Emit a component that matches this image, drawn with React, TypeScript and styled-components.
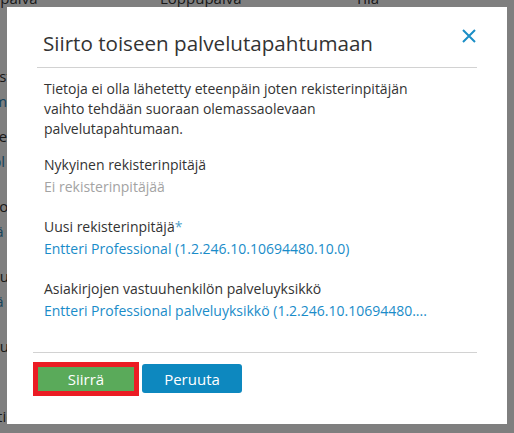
import React from "react";
import styled, { createGlobalStyle } from "styled-components";

const GlobalStyle = createGlobalStyle`
  html, body { margin: 0; padding: 0; overflow: hidden; }
  body { font-family: "Segoe UI", "Open Sans", "Noto Sans", sans-serif; background: #fff; }
`;

const Page = styled.div`
  width: 514px;
  height: 433px;
  overflow: hidden;
  background: #fff;
`;

const BackList = styled.div`
  display: flex;
  flex-direction: column;
  margin-top: -14px;
  margin-left: -30px;
  font-size: 15px;
  line-height: 25px;
`;

const HeaderRow = styled.div`
  display: grid;
  grid-template-columns: 190px 195px 100px;
  color: #333;
  margin-bottom: 8px;
`;

const BackLabel = styled.div<{ $gap?: number }>`
  color: #333;
  margin-top: ${(p) => p.$gap ?? 20}px;
`;

const BackValue = styled.div`
  color: #2c86b8;
`;

const Overlay = styled.div`
  position: fixed;
  inset: 0;
  background: rgba(0, 0, 0, 0.5);
  display: flex;
  align-items: flex-start;
  justify-content: flex-start;
  padding: 7px 0 0 7px;
`;

const Modal = styled.div`
  width: 500px;
  height: 417px;
  background: #fff;
  box-sizing: border-box;
  padding: 0 30px;
  display: flex;
  flex-direction: column;
`;

const Header = styled.div`
  display: flex;
  align-items: center;
  justify-content: space-between;
  height: 60px;
  border-bottom: 1px solid #d2d2d2;
  padding: 0 0 0 6px;
`;

const Title = styled.h2`
  margin: 0;
  padding-top: 12px;
  font-weight: 400;
  font-size: 20.6px;
  color: #333;
`;

const CloseButton = styled.button`
  border: 0;
  background: none;
  padding: 0;
  margin-top: -2px;
  width: 16px;
  height: 16px;
  display: flex;
  cursor: pointer;
`;

const Body = styled.div`
  flex: 1;
  padding: 11px 6px 0 7px;
  font-size: 14px;
  color: #333;
`;

const Intro = styled.p`
  margin: 0 0 15px;
  line-height: 20px;
  max-width: 400px;
`;

const Field = styled.div`
  display: flex;
  flex-direction: column;
  margin-bottom: 18px;
`;

const Label = styled.div`
  line-height: 22px;
  color: #333;
`;

const Req = styled.span`
  color: #4f9fc9;
`;

const Value = styled.div<{ $muted?: boolean }>`
  line-height: 22px;
  color: ${(p) => (p.$muted ? "#a3a3a3" : "#1a8cc9")};
  white-space: nowrap;
  overflow: hidden;
`;

const Footer = styled.div`
  border-top: 1px solid #d2d2d2;
  display: flex;
  gap: 3px;
  height: 72px;
  margin-left: -4px;
  box-sizing: border-box;
  padding-top: 9px;
  align-items: flex-start;
`;

const Button = styled.button<{ $variant: "primary" | "secondary" }>`
  font-family: inherit;
  font-size: 15px;
  color: #fff;
  cursor: pointer;
  padding: 0;
  ${(p) =>
    p.$variant === "primary"
      ? `
    background: #5aaa5a;
    border: 5px solid #eb1c24;
    width: 106px;
    height: 34px;
    border-radius: 0;
  `
      : `
    background: #0d88bf;
    border: 0;
    width: 100px;
    height: 29px;
    border-radius: 3px;
    margin-top: 2px;
  `}
`;

export default function App() {
  return (
    <>
      <GlobalStyle />
      <Page>
        <BackList>
          <HeaderRow>
            <span>Alkupäivä</span>
            <span>Loppupäivä</span>
            <span>Tila</span>
          </HeaderRow>
          <BackValue>12</BackValue>
          <BackLabel $gap={20}>Rekisterinpitäjä</BackLabel>
          <BackValue>Ammm</BackValue>
          <BackLabel $gap={10}>Palvelue</BackLabel>
          <BackValue>Kuibl</BackValue>
          <BackLabel $gap={20}>Hoitoll</BackLabel>
          <BackValue>Ei pä</BackValue>
          <BackLabel $gap={20}>Vastuuve</BackLabel>
          <BackValue>Ei pä</BackValue>
          <BackLabel $gap={20}>Vastuuve</BackLabel>
          <BackValue>20</BackValue>
          <BackLabel $gap={20}>Lisätiedni</BackLabel>
        </BackList>
      </Page>
      <Overlay>
        <Modal>
          <Header>
            <Title>Siirto toiseen palvelutapahtumaan</Title>
            <CloseButton aria-label="Sulje">
              <svg width="16" height="16" viewBox="0 0 16 16">
                <path d="M2 2 L14 14 M14 2 L2 14" stroke="#1b8ec6" strokeWidth="2" fill="none" />
              </svg>
            </CloseButton>
          </Header>
          <Body>
            <Intro>
              Tietoja ei olla lähetetty eteenpäin joten rekisterinpitäjän vaihto tehdään suoraan olemassaolevaan
              palvelutapahtumaan.
            </Intro>
            <Field>
              <Label>Nykyinen rekisterinpitäjä</Label>
              <Value $muted>Ei rekisterinpitäjää</Value>
            </Field>
            <Field>
              <Label>
                Uusi rekisterinpitäjä<Req>*</Req>
              </Label>
              <Value>Entteri Professional (1.2.246.10.10694480.10.0)</Value>
            </Field>
            <Field>
              <Label>Asiakirjojen vastuuhenkilön palveluyksikkö</Label>
              <Value>Entteri Professional palveluyksikkö (1.2.246.10.10694480....</Value>
            </Field>
          </Body>
          <Footer>
            <Button $variant="primary">Siirrä</Button>
            <Button $variant="secondary">Peruuta</Button>
          </Footer>
        </Modal>
      </Overlay>
    </>
  );
}
